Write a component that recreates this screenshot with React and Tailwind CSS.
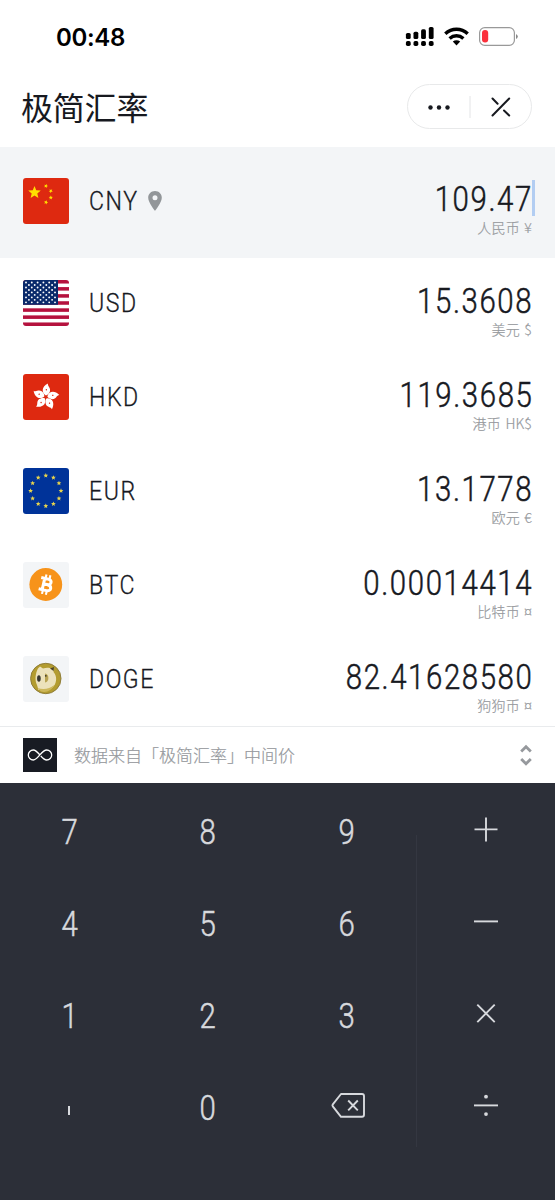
import React from "react";

const starPoints = (cx, cy, r, rot = -90) =>
  Array.from({ length: 10 }, (_, i) => {
    const a = ((rot + i * 36) * Math.PI) / 180;
    const q = i % 2 ? r * 0.45 : r;
    return `${(cx + q * Math.cos(a)).toFixed(2)},${(cy + q * Math.sin(a)).toFixed(2)}`;
  }).join(" ");

const Star = ({ cx, cy, r, rot }) => <polygon points={starPoints(cx, cy, r, rot)} />;

function China() {
  return (
    <g fill="#ffde00">
      <rect width="46" height="46" fill="#de2910" />
      <Star cx={11.5} cy={14.6} r={6.6} />
      <Star cx={23} cy={8} r={2.2} rot={-70} />
      <Star cx={27.8} cy={13} r={2.2} rot={-50} />
      <Star cx={27.8} cy={19.6} r={2.2} />
      <Star cx={23} cy={24.3} r={2.2} rot={-70} />
    </g>
  );
}

function Usa() {
  const h = 46 / 13;
  const dots = [];
  for (let r = 0; r < 9; r++)
    for (let c = 0; c < (r % 2 ? 5 : 6); c++)
      dots.push(<circle key={`${r}-${c}`} cx={3 + c * 5.8 + (r % 2 ? 2.9 : 0)} cy={2.5 + r * 2.48} r="0.95" fill="#fff" />);
  return (
    <g>
      <rect width="46" height="46" fill="#fff" />
      {[0, 2, 4, 6, 8, 10, 12].map((i) => (
        <rect key={i} y={i * h} width="46" height={h} fill="#b5123e" />
      ))}
      <rect width="35" height={h * 7} fill="#0a2a6b" />
      {dots}
    </g>
  );
}

function HongKong() {
  return (
    <g>
      <rect width="46" height="46" fill="#de2910" />
      {[0, 72, 144, 216, 288].map((a) => (
        <g key={a} transform={`translate(22.8 23) rotate(${a + 3})`}>
          <path d="M0 -1.6C-4.6 -4 -5 -10 1.5 -13.6C0.8 -10.8 4.8 -9.6 3.8 -5.8C3.2 -3.4 1.4 -2 0 -1.6Z" fill="#fff" />
          <circle cx="0.2" cy="-7.2" r="0.7" fill="#de2910" />
        </g>
      ))}
    </g>
  );
}

function Europe() {
  return (
    <g fill="#e8d44c">
      <rect width="46" height="46" fill="#039" />
      {Array.from({ length: 12 }, (_, i) => {
        const a = (i * Math.PI) / 6;
        return <Star key={i} cx={22.8 + 15.2 * Math.sin(a)} cy={22.8 - 15.2 * Math.cos(a)} r={2.5} />;
      })}
    </g>
  );
}

function Bitcoin() {
  return (
    <g>
      <rect width="46" height="46" fill="#f3f5f7" />
      <circle cx="22.8" cy="22.5" r="16.4" fill="#f7931a" />
      <g transform="translate(22.8 22.5) rotate(13)" fill="none" stroke="#fff" strokeWidth="3">
        <path d="M-6 -5.8H1.2C5.8 -5.8 5.8 -0.2 1.2 -0.2H-2M-6 5.8H2C7 5.8 7 -0.2 1.2 -0.2M-2.4 -6V6" />
        <path d="M-1.6 -10V-6M2.4 -10V-6M-1.6 6V10M2.4 6V10" strokeWidth="2.1" />
      </g>
    </g>
  );
}

function Doge() {
  return (
    <g>
      <rect width="46" height="46" fill="#f3f5f7" />
      <circle cx="22.8" cy="22.5" r="15.2" fill="#b39c2f" stroke="#8f7d3a" strokeWidth="1" />
      <path d="M15 12.5L17 10.5L20 12.5C24 11.3 27 11.8 28.6 13L30.5 12V16C34.5 20 34 28 29 32C26 34 21 34 15.5 34L14 29C11.5 24 12.5 17 15 12.5Z" fill="#ece2bb" />
      <path d="M14.5 32C20 34 27 33 31 29C29 34 24 37 18 35.5Z" fill="#cdb75a" />
      <path d="M27 12.5L31 11L30.6 15Z" fill="#4c4429" />
      <ellipse cx="15.9" cy="22.5" rx="1.8" ry="3.2" fill="#37362f" />
      <path d="M22 17.5C26.5 17.5 26.5 26.5 22 26.5Z" fill="#b8a352" />
      <circle cx="22.8" cy="19.8" r="0.9" fill="#3c382b" />
    </g>
  );
}

const rows = [
  { code: "USD", value: "15.3608", name: "美元 $", Flag: Usa },
  { code: "HKD", value: "119.3685", name: "港币 HK$", Flag: HongKong },
  { code: "EUR", value: "13.1778", name: "欧元 €", Flag: Europe },
  { code: "BTC", value: "0.00014414", name: "比特币 ¤", Flag: Bitcoin },
  { code: "DOGE", value: "82.41628580", name: "狗狗币 ¤", Flag: Doge },
];

function Row({ code, value, name, Flag, active }) {
  return (
    <div className={active ? "flex h-[111px] items-start bg-[#f3f5f7] pt-[31px] pr-[23px] pl-[22.5px]" : "flex h-[94px] shrink-0 items-start pt-[22px] pr-[23px] pl-[22.5px]"}>
      <svg className="h-[46px] w-[46px] shrink-0 rounded-[3px]" viewBox="0 0 46 46">
        <Flag />
      </svg>
      <div className="ml-5 flex h-[46px] items-center">
        <span className="origin-left scale-x-[0.89] font-[Roboto,sans-serif] text-[26px] leading-[46px] font-light tracking-[1.7px] text-[#17191f] [-webkit-text-stroke:0.3px_#17191f]">{code}</span>
        {active && (
          <svg className="ml-1 h-5 w-[14px]" viewBox="0 0 14 20">
            <path fillRule="evenodd" fill="#929699" d="M7 0C3.1 0 .2 2.9 .2 6.7C.2 11.5 7 19.8 7 19.8S13.8 11.5 13.8 6.7C13.8 2.9 10.9 0 7 0ZM7 4.2A2.5 2.5 0 1 1 7 9.2A2.5 2.5 0 0 1 7 4.2Z" />
          </svg>
        )}
      </div>
      <div className="ml-auto flex flex-col items-end">
        <div className="relative h-[42px]">
          <span className="-mr-[1px] block origin-right translate-y-px scale-x-[0.84] font-[Roboto,sans-serif] text-[35px] leading-[42px] font-light tracking-[1.9px] text-[#17191f] [-webkit-text-stroke:0.5px_#17191f]">{value}</span>
          {active && <span className="absolute top-[2px] -right-[3px] h-9 w-[3px] bg-[#b2cdf2]" />}
        </div>
        <span className="-mt-[2px] font-['Noto_Sans_CJK_SC',sans-serif] text-[14px] leading-[18px] font-light tracking-[0.15px] [word-spacing:1.3px] text-[#96999d] [-webkit-text-stroke:0.2px_#96999d]">{name}</span>
      </div>
    </div>
  );
}

function StatusBar() {
  return (
    <div className="flex h-[74px] items-center justify-between pr-[37px] pl-[56px]">
      <span className="pt-[2px] font-[Inter,sans-serif] text-[24px] leading-[74px] font-semibold tracking-[-0.35px] text-black">00:48</span>
      <svg className="h-6 w-[113px]" viewBox="0 0 113 24">
        <g fill="#000">
          {[0, 7.6, 15.2, 22.9].map((x, i) => (
            <g key={x}>
              <rect x={x + 0.9} y={[8, 6.7, 4.3, 2][i]} width="4.8" height={[6, 7.3, 9.7, 12][i]} rx="1.6" />
              <rect x={x + 0.9} y="16" width="4.8" height="5" rx="1.7" />
            </g>
          ))}
        </g>
        <g fill="none" stroke="#000" strokeWidth="3.4">
          <path d="M40.3 8.8C46.7 2.8 56.3 2.8 62.7 8.8" />
          <path d="M44.6 13.4C48.6 9.8 54.4 9.8 58.4 13.4" />
        </g>
        <path d="M51.5 20.5L47.8 16.6C50 14.8 53 14.8 55.2 16.6Z" fill="#000" />
        <rect x="74.6" y="2.6" width="34.8" height="17.8" rx="5.2" fill="none" stroke="#999" strokeWidth="1.2" />
        <rect x="77" y="5" width="6.2" height="12.6" rx="3" fill="#fb303c" />
        <path d="M111 9V14Q112.8 13 112.8 11.5T111 9" fill="#888" />
      </svg>
    </div>
  );
}

function Header() {
  return (
    <div className="flex h-[73px] items-start justify-between pr-[23px] pl-[21px]">
      <h1 className="pt-[12px] font-['Noto_Sans_CJK_SC',sans-serif] text-[32px] leading-[40px] font-normal tracking-[-0.2px] text-[#17191f]">极简汇率</h1>
      <div className="mt-[10px] flex h-[45px] w-[125px] items-center rounded-full border border-[#e8e9ea]">
        <svg className="h-11 w-full" viewBox="0 0 123 44">
          <g fill="#17191f">
            <circle cx="22.5" cy="22.5" r="2.2" />
            <circle cx="31" cy="22.5" r="2.2" />
            <circle cx="39.5" cy="22.5" r="2.2" />
          </g>
          <path d="M62 11V33" stroke="#e3e4e6" strokeWidth="1" />
          <path d="M84.5 30.5L101.2 13.5M84.5 13.5L89.6 18.7M96 25.5L101.2 30.5" stroke="#17191f" strokeWidth="2" strokeLinecap="round" />
        </svg>
      </div>
    </div>
  );
}

const glyphs = {
  plus: <path d="M-11.5 0H11.5M0 -12V12" />,
  minus: <path d="M-12 0H12" />,
  times: <path d="M-8.7 -8.7L8.7 8.7M8.7 -8.7L-8.7 8.7" />,
  divide: (
    <>
      <path d="M-12 0H12" />
      <circle cy="-8.7" r="1.9" fill="#d7d9dd" stroke="none" />
      <circle cy="8.7" r="1.9" fill="#d7d9dd" stroke="none" />
    </>
  ),
  back: (
    <>
      <path d="M-6 -11.4H15Q17 -11.4 17 -9.4V9.4Q17 11.4 15 11.4H-6L-14.2 1Q-15 0 -14.2 -1Z" />
      <path d="M1.2 -4.9L10.8 4.9M10.8 -4.9L1.2 4.9" />
    </>
  ),
};

function Glyph({ name }) {
  return (
    <svg className="h-10 w-10" viewBox="-20 -20.4 40 40" fill="none" stroke="#d7d9dd" strokeWidth="1.9" strokeLinejoin="round">
      {glyphs[name]}
    </svg>
  );
}

function Keypad() {
  return (
    <div className="flex flex-1 items-start bg-[#2c2f38]">
      <div className="grid w-[416px] auto-rows-[92px] grid-cols-3">
        {["7", "8", "9", "4", "5", "6", "1", "2", "3", ",", "0", "back"].map((k) => (
          <button key={k} aria-label={k} className="flex items-center justify-center">
            {k === "back" ? (
              <Glyph name="back" />
            ) : k === "," ? (
              <span className="mt-[10px] h-[9px] w-[2px] bg-[#d7d9dd]" />
            ) : (
              <span className="scale-x-[0.84] pt-[7px] font-[Roboto,sans-serif] text-[35px] leading-10 font-light text-[#d7d9dd] [-webkit-text-stroke:0.5px_#d7d9dd]">{k}</span>
            )}
          </button>
        ))}
      </div>
      <div className="mt-[52px] h-[312px] w-px bg-[#343741]" />
      <div className="grid flex-1 auto-rows-[92px]">
        {["plus", "minus", "times", "divide"].map((k) => (
          <button key={k} aria-label={k} className="flex items-center justify-center">
            <Glyph name={k} />
          </button>
        ))}
      </div>
    </div>
  );
}

export default function App() {
  return (
    <div className="flex h-[1200px] w-[555px] flex-col overflow-hidden bg-white">
      <StatusBar />
      <Header />
      <Row active code="CNY" value="109.47" name="人民币 ¥" Flag={China} />
      <div className="flex h-[468px] flex-col overflow-hidden">
        {rows.map((r) => (
          <Row key={r.code} {...r} />
        ))}
      </div>
      <div className="flex h-[57px] items-center border-t border-[#e9ebed] pr-[23px] pl-[23px]">
        <svg className="h-[34px] w-[34px]" viewBox="0 0 34 34">
          <rect width="34" height="34" fill="#181b23" />
          <path d="M17 17C14 13.5 12.5 12 10.3 12A5 5 0 0 0 10.3 22C15 22 18.5 12 23.7 12A5 5 0 0 1 23.7 22C21.5 22 20 20.5 17.8 18" fill="none" stroke="#fff" strokeWidth="1.3" />
        </svg>
        <span className="ml-[17px] font-['Noto_Sans_CJK_SC',sans-serif] text-[17px] leading-6 font-light text-[#96999d] [-webkit-text-stroke:0.2px_#96999d]">数据来自「极简汇率」中间价</span>
        <svg className="ml-auto h-6 w-3" viewBox="0 0 12 24" fill="none" stroke="#96999d" strokeWidth="2.8">
          <path d="M1.2 8.5L6 3.7L10.8 8.5M1.2 16L6 20.8L10.8 16" />
        </svg>
      </div>
      <Keypad />
    </div>
  );
}
